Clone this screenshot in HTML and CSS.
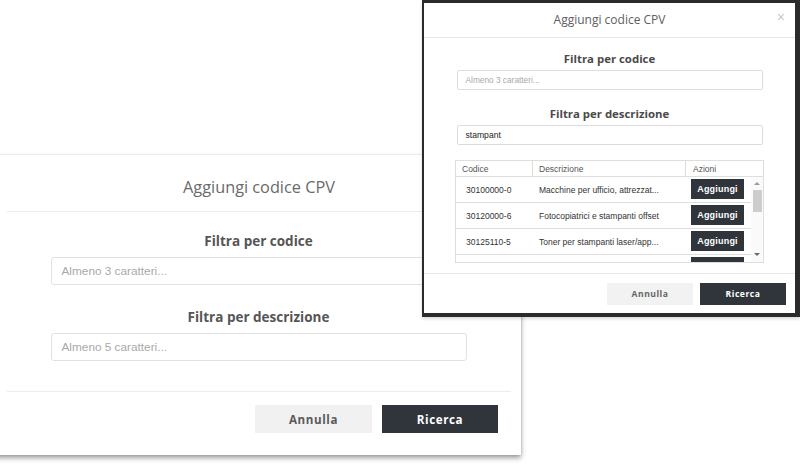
FILE: index.html
```html
<!DOCTYPE html>
<html lang="it">
<head>
<meta charset="utf-8">
<title>Aggiungi codice CPV</title>
<link rel="stylesheet" href="styles.css">
</head>
<body>
<div class="desk">
  <section class="modal back">
    <header class="back-head"><h2 class="back-title">Aggiungi codice CPV</h2></header>
    <div class="back-body">
      <label class="back-label">Filtra per codice</label>
      <div class="back-input placeholder">Almeno 3 caratteri...</div>
      <label class="back-label second">Filtra per descrizione</label>
      <div class="back-input placeholder">Almeno 5 caratteri...</div>
    </div>
    <footer class="back-foot">
      <button class="btn back-btn light">Annulla</button>
      <button class="btn back-btn dark">Ricerca</button>
    </footer>
  </section>

  <section class="modal front">
    <div class="front-inner">
      <header class="front-head">
        <h2 class="front-title">Aggiungi codice CPV</h2>
        <span class="close">×</span>
      </header>
      <div class="front-body">
        <label class="front-label">Filtra per codice</label>
        <div class="front-input placeholder">Almeno 3 caratteri...</div>
        <label class="front-label second">Filtra per descrizione</label>
        <div class="front-input value">stampant</div>
        <div class="table">
          <div class="thead">
            <div class="th">Codice</div>
            <div class="th">Descrizione</div>
            <div class="th last">Azioni</div>
          </div>
          <div class="tbody">
            <div class="rows">
              <div class="tr"><div class="td code">30100000-0</div><div class="td desc">Macchine per ufficio, attrezzat...</div><div class="td act"><button class="btn add">Aggiungi</button></div></div>
              <div class="tr"><div class="td code">30120000-6</div><div class="td desc">Fotocopiatrici e stampanti offset</div><div class="td act"><button class="btn add">Aggiungi</button></div></div>
              <div class="tr"><div class="td code">30125110-5</div><div class="td desc">Toner per stampanti laser/app...</div><div class="td act"><button class="btn add">Aggiungi</button></div></div>
              <div class="tr"><div class="td code"></div><div class="td desc"></div><div class="td act"><button class="btn add" aria-label="Aggiungi"></button></div></div>
            </div>
            <div class="scrollbar">
              <span class="arrow up"></span>
              <span class="thumb"></span>
              <span class="spacer"></span>
              <span class="arrow down"></span>
            </div>
          </div>
        </div>
      </div>
      <footer class="front-foot">
        <button class="btn front-btn light">Annulla</button>
        <button class="btn front-btn dark">Ricerca</button>
      </footer>
    </div>
  </section>
</div>
</body>
</html>
```

FILE: styles.css
```css
* { box-sizing: border-box; }
html, body { margin: 0; padding: 0; background: #ffffff; }
body { width: 800px; height: 467px; overflow: hidden; font-family: "Open Sans", "Liberation Sans", sans-serif; }

.desk { position: relative; width: 800px; height: 467px; }

.modal { position: absolute; background: #fff; }

/* ---------- back modal ---------- */
.back {
  left: -4px; top: 155px; width: 525px; height: 300px;
  box-shadow: 0 3px 5px rgba(0,0,0,0.38), 0 0 2px rgba(0,0,0,0.12);
  display: flex; flex-direction: column;
}
.back-head {
  margin: 0 10px 0 11px; height: 57px; padding-top: 8px;
  border-bottom: 1px solid #ececec;
  display: flex; align-items: center; justify-content: center;
}
.back-title { margin: 0; font-size: 16.3px; font-weight: 400; color: #6a6a6a; }
.back-body {
  padding: 19px 0 30px; display: flex; flex-direction: column; align-items: center;
}
.back-label { display: block; font-size: 13.5px; line-height: 20px; font-weight: 700; color: #555; }
.back-label.second { margin-top: 22px; }
.back-input {
  margin-top: 6px; width: 416px; height: 28px;
  border: 1px solid #e2e2e2; border-radius: 3px;
  padding-left: 10px; display: flex; align-items: center;
  font-family: "Liberation Sans", Arial, sans-serif; font-size: 11.8px;
}
.placeholder { color: #a9a9a9; }
.value { color: #333; }
.back-foot {
  margin: 0 10px 0 11px; border-top: 1px solid #ececec;
  padding: 13px 13px 0 0; display: flex; justify-content: flex-end; gap: 10px;
}
.btn { border: 0; border-radius: 0; font-family: "Open Sans", "Liberation Sans", sans-serif; font-weight: 700; cursor: pointer; padding: 0; }
.back-btn { height: 28px; font-size: 11.6px; letter-spacing: 0.6px; }
.back-btn.light { width: 117px; background: #f1f1f1; color: #5a5a5a; }
.back-btn.dark { width: 116px; background: #2f353b; color: #fff; }

/* ---------- front modal ---------- */
.front {
  left: 422px; top: 0; width: 378px; height: 317px;
  background: #2b2b2b;
  padding: 3px 5px 4px 2px;
  box-shadow: 0 2px 3px rgba(0,0,0,0.15);
}
.front-inner { background: #fff; width: 100%; height: 100%; display: flex; flex-direction: column; }
.front-head {
  position: relative; height: 35px; padding-bottom: 2px;
  border-bottom: 1px solid #e6e6e6;
  display: flex; align-items: center; justify-content: center;
}
.front-title { margin: 0; font-size: 12px; font-weight: 400; color: #606060; }
.close {
  position: absolute; right: 10px; top: 6px;
  font-family: "Liberation Sans", Arial, sans-serif; font-size: 14px; color: #c8c8c8; line-height: 16px;
}
.front-body { padding: 14px 0 8px; display: flex; flex-direction: column; align-items: center; }
.front-label { display: block; font-size: 11.4px; line-height: 14px; font-weight: 700; color: #4a4a4a; }
.front-label.second { margin-top: 17px; }
.front-input {
  margin-top: 4px; width: 306px; height: 20px;
  border: 1px solid #dcdcdc; border-radius: 2px;
  padding-left: 8px; display: flex; align-items: center;
  font-family: "Liberation Sans", Arial, sans-serif; font-size: 8.3px;
}
.front-input.value { font-size: 8.6px; color: #222; }

.table {
  margin-top: 15px; width: 309px; height: 103px;
  border: 1px solid #dedede;
  font-family: "Liberation Sans", Arial, sans-serif; font-size: 8.5px; color: #444;
  display: flex; flex-direction: column;
}
.thead { display: grid; grid-template-columns: 77px 153px 1fr; height: 16px; border-bottom: 1px solid #dedede; }
.th { border-right: 1px solid #dedede; padding-left: 6px; display: flex; align-items: center; color: #555; }
.th.last { border-right: 0; padding-left: 7px; }
.tbody { flex: 1; display: flex; overflow: hidden; }
.rows { flex: 1; overflow: hidden; }
.tr { display: grid; grid-template-columns: 77px 153px 1fr; height: 26px; border-bottom: 1px solid #dedede; }
.td { display: flex; align-items: center; }
.td.code { padding-left: 10px; color: #333; }
.td.desc { padding-left: 6px; color: #333; }
.td.act { padding-left: 5px; padding-bottom: 1px; }
.add { width: 53px; height: 20px; background: #2f353b; color: #fff; font-family: "Liberation Sans", Arial, sans-serif; font-size: 9px; letter-spacing: 0.2px; }

.scrollbar { width: 12px; background: #fafafa; display: flex; flex-direction: column; align-items: center; padding: 5px 0 6px; }
.arrow { width: 0; height: 0; border-left: 3px solid transparent; border-right: 3px solid transparent; }
.arrow.up { border-bottom: 3px solid #9a9a9a; }
.arrow.down { border-top: 3px solid #6a6a6a; }
.thumb { margin-top: 5px; width: 9px; height: 22px; background: #cdcdcd; }
.spacer { flex: 1; }

.front-foot {
  margin-top: auto; border-top: 1px solid #e6e6e6;
  padding: 9px 9px 8px 0; display: flex; justify-content: flex-end; gap: 7px;
}
.front-btn { height: 22px; width: 86px; font-size: 8.6px; letter-spacing: 0.5px; }
.front-btn.light { background: #f2f2f2; color: #666; }
.front-btn.dark { background: #2f353b; color: #fff; }
```
